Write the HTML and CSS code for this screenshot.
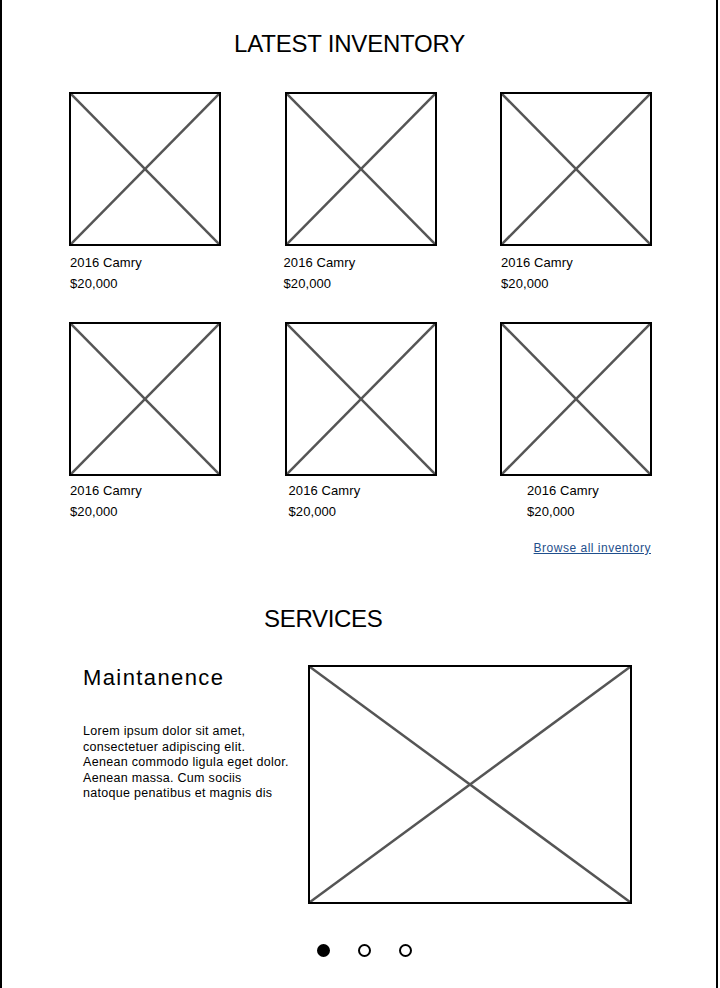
FILE: index.html
```html
<!DOCTYPE html>
<html>
<head>
<meta charset="utf-8">
<link rel="stylesheet" href="styles.css">
</head>
<body>
<div class="page">
  <h1 class="heading heading-inventory">LATEST INVENTORY</h1>

  <div class="grid">
    <div class="card">
      <div class="ph"><svg viewBox="0 0 100 100" preserveAspectRatio="none"><line x1="0" y1="0" x2="100" y2="100"/><line x1="100" y1="0" x2="0" y2="100"/></svg></div>
      <div class="cap"><div>2016 Camry</div><div>$20,000</div></div>
    </div>
    <div class="card">
      <div class="ph"><svg viewBox="0 0 100 100" preserveAspectRatio="none"><line x1="0" y1="0" x2="100" y2="100"/><line x1="100" y1="0" x2="0" y2="100"/></svg></div>
      <div class="cap cap-shift-n"><div>2016 Camry</div><div>$20,000</div></div>
    </div>
    <div class="card">
      <div class="ph"><svg viewBox="0 0 100 100" preserveAspectRatio="none"><line x1="0" y1="0" x2="100" y2="100"/><line x1="100" y1="0" x2="0" y2="100"/></svg></div>
      <div class="cap"><div>2016 Camry</div><div>$20,000</div></div>
    </div>
    <div class="card">
      <div class="ph"><svg viewBox="0 0 100 100" preserveAspectRatio="none"><line x1="0" y1="0" x2="100" y2="100"/><line x1="100" y1="0" x2="0" y2="100"/></svg></div>
      <div class="cap cap-row2"><div>2016 Camry</div><div>$20,000</div></div>
    </div>
    <div class="card">
      <div class="ph"><svg viewBox="0 0 100 100" preserveAspectRatio="none"><line x1="0" y1="0" x2="100" y2="100"/><line x1="100" y1="0" x2="0" y2="100"/></svg></div>
      <div class="cap cap-row2 cap-shift-s"><div>2016 Camry</div><div>$20,000</div></div>
    </div>
    <div class="card">
      <div class="ph"><svg viewBox="0 0 100 100" preserveAspectRatio="none"><line x1="0" y1="0" x2="100" y2="100"/><line x1="100" y1="0" x2="0" y2="100"/></svg></div>
      <div class="cap cap-row2 cap-shift-l"><div>2016 Camry</div><div>$20,000</div></div>
    </div>
  </div>

  <div class="browse"><a href="#" class="browse-link">Browse all inventory</a></div>

  <h2 class="heading heading-services">SERVICES</h2>

  <div class="service">
    <div class="service-text">
      <h3 class="service-title">Maintanence</h3>
      <p class="service-desc">Lorem ipsum dolor sit amet,<br>consectetuer adipiscing elit.<br>Aenean commodo ligula eget dolor.<br>Aenean massa. Cum sociis<br>natoque penatibus et magnis dis</p>
    </div>
    <div class="ph ph-large"><svg viewBox="0 0 100 100" preserveAspectRatio="none"><line x1="0" y1="0" x2="100" y2="100"/><line x1="100" y1="0" x2="0" y2="100"/></svg></div>
  </div>

  <div class="dots">
    <span class="dot dot-on"></span>
    <span class="dot"></span>
    <span class="dot"></span>
  </div>
</div>
</body>
</html>
```

FILE: styles.css
```css
html, body {
  margin: 0;
  padding: 0;
  background: #fff;
}

body {
  font-family: "Liberation Sans", Arial, sans-serif;
  color: #000;
}

.page {
  width: 718px;
  height: 988px;
  box-sizing: border-box;
  border-left: 2px solid #000;
  border-right: 2px solid #000;
  overflow: hidden;
}

.heading {
  margin: 0;
  font-weight: normal;
  font-size: 24px;
  line-height: 28px;
  letter-spacing: -0.3px;
}

.heading-inventory {
  padding-top: 30px;
  padding-left: 232px;
  letter-spacing: -0.2px;
}

.grid {
  margin-top: 34px;
  padding-left: 67px;
  display: grid;
  grid-template-columns: repeat(3, 152px);
  column-gap: 63.5px;
  row-gap: 28px;
}

.card {
  display: flex;
  flex-direction: column;
}

.ph {
  border: 2px solid #000;
  height: 154px;
  box-sizing: border-box;
  background: #fff;
}

.ph svg {
  display: block;
  width: 100%;
  height: 100%;
}

.ph line {
  stroke: #555;
  stroke-width: 2.5;
  vector-effect: non-scaling-stroke;
}

.cap {
  margin-top: 6px;
  font-size: 13px;
  line-height: 21px;
  padding-left: 1px;
  letter-spacing: 0.1px;
}

.cap-row2 {
  margin-top: 4px;
}

.cap-shift-n {
  margin-left: -2px;
}

.cap-shift-s {
  padding-left: 4px;
}

.cap-shift-l {
  padding-left: 27px;
}

.browse {
  margin-top: 18px;
  width: 649px;
  display: flex;
  justify-content: flex-end;
  line-height: 16px;
}

.browse-link {
  font-size: 12px;
  color: #1f4f8c;
  text-decoration: underline;
  letter-spacing: 0.5px;
}

.heading-services {
  margin-top: 49px;
  padding-left: 262px;
}

.service {
  margin-top: 32px;
  display: flex;
  padding-left: 81px;
}

.service-text {
  width: 225px;
}

.service-title {
  margin: 0;
  font-weight: normal;
  font-size: 22px;
  line-height: 26px;
  letter-spacing: 1.4px;
}

.service-desc {
  margin: 33px 0 0 0;
  font-size: 12.5px;
  line-height: 15.5px;
  letter-spacing: 0.3px;
  white-space: nowrap;
}

.ph-large {
  width: 324px;
  height: 239px;
}

.dots {
  margin-top: 40px;
  padding-left: 315px;
  display: flex;
  gap: 28px;
}

.dot {
  width: 13px;
  height: 13px;
  border-radius: 50%;
  box-sizing: border-box;
  border: 2px solid #000;
  background: #fff;
}

.dot-on {
  background: #000;
}
```
